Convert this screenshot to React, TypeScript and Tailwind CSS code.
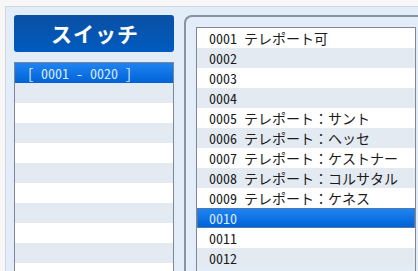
import { FC } from 'react';

const leftRows = ['[ 0001 - 0020 ]', '', '', '', '', '', '', '', '', '', ''];

const rightRows = [
    '0001 テレポート可',
    '0002',
    '0003',
    '0004',
    '0005 テレポート：サント',
    '0006 テレポート：ヘッセ',
    '0007 テレポート：ケストナー',
    '0008 テレポート：コルサタル',
    '0009 テレポート：ケネス',
    '0010',
    '0011',
    '0012',
];

const mono = { fontFamily: '"Noto Sans Mono CJK JP", "Noto Sans CJK JP", monospace' };

const Row: FC<{ text: string; index: number; selected: boolean; framed?: boolean }> = ({
    text,
    index,
    selected,
    framed,
}) => {
    if (selected) {
        return (
            <div
                className={`h-5 shrink-0 flex items-center pl-3 text-[14px] leading-none whitespace-pre text-[#dceaff] bg-gradient-to-b from-[#1f84f2] to-[#0062d6] ${
                    framed ? 'border border-[#5079ad] pl-[11px]' : ''
                }`}
            >
                {text}
            </div>
        );
    }
    return (
        <div
            className={`h-5 shrink-0 flex items-center pl-3 text-[14px] leading-none whitespace-pre text-[#1c1c1c] ${
                index % 2 === 1 ? 'bg-[#e3eaf1]' : 'bg-white'
            }`}
        >
            {text}
        </div>
    );
};

export default function App() {
    return (
        <div className="w-[418px] h-[271px] overflow-hidden bg-[#f7f7f7] flex flex-col" style={mono}>
            <div className="ml-[5px] mt-[6px] flex-1 border-l border-t border-[#d3d7dc] bg-[#e3edf9] flex pl-2 pt-2 gap-[10px] min-h-0">
                <div className="w-[160px] shrink-0 flex flex-col gap-[10px]">
                    <div className="h-[37px] rounded-[3px] bg-gradient-to-b from-[#0a50a3] to-[#005bbf] flex items-center justify-center pl-[2px]">
                        <span
                            className="text-white text-[21px] font-bold tracking-[1px] leading-none"
                            style={{ fontFamily: '"Noto Sans CJK JP", sans-serif' }}
                        >
                            スイッチ
                        </span>
                    </div>
                    <div className="flex-1 border border-[#7f8791] border-b-0 flex flex-col overflow-hidden">
                        {leftRows.map((t, i) => (
                            <Row key={i} text={t} index={i} selected={i === 0} />
                        ))}
                    </div>
                </div>
                <div className="w-[260px] shrink-0 border-l-2 border-t-2 border-[#8a929c] rounded-tl-[8px] pl-[10px] pt-[10px] flex flex-col">
                    <div className="w-[220px] flex-1 border border-[#7f8791] border-b-0 flex flex-col overflow-hidden">
                        {rightRows.map((t, i) => (
                            <Row key={i} text={t} index={i} selected={i === 9} framed />
                        ))}
                    </div>
                </div>
            </div>
        </div>
    );
}
